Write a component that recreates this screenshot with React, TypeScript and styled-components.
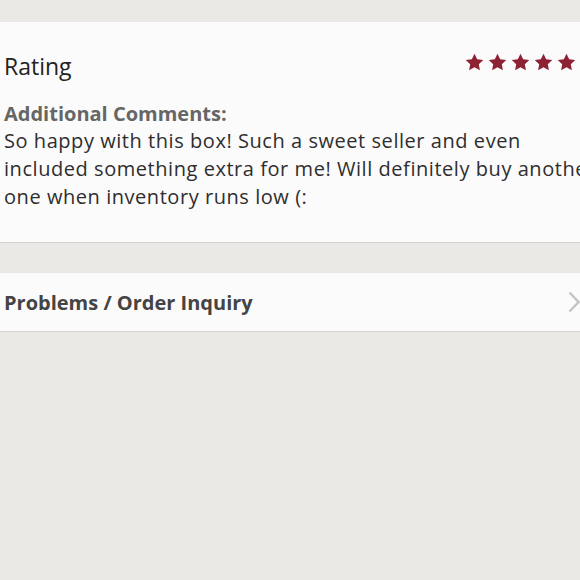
import * as React from 'react';
import styled, { createGlobalStyle } from 'styled-components';

const GlobalStyle = createGlobalStyle`
    html, body {
        margin: 0;
        padding: 0;
        background-color: #ebe9e5;
        overflow: hidden;
    }
    body {
        font-family: "Open Sans", "Lato", sans-serif;
        width: 580px;
        height: 580px;
    }
`;

const Page = styled.main`
    display: flex;
    flex-direction: column;
    gap: 30px;
    padding-top: 22px;
    width: 580px;
    overflow: hidden;
`;

const Card = styled.section`
    background-color: #fcfbfb;
    border-bottom: 1px solid #d6d3cf;
`;

const ReviewCard = styled(Card)`
    display: flex;
    flex-direction: column;
    padding: 28px 0 31px 4px;
`;

const RatingRow = styled.div`
    display: flex;
    justify-content: space-between;
    align-items: center;
    width: 572px;
`;

const Title = styled.h2`
    margin: 0;
    font-size: 23px;
    font-weight: 400;
    color: #222;
`;

const Stars = styled.div`
    display: flex;
    gap: 4px;
    margin-top: -8px;
`;

const Label = styled.h3`
    margin: 18px 0 0;
    font-size: 20px;
    font-weight: 700;
    color: #666;
`;

// the comment runs past the right edge in the app, so it is wider than the view
const Comment = styled.p`
    margin: 0;
    width: 603px;
    flex-shrink: 0;
    font-size: 20px;
    letter-spacing: 0.55px;
    line-height: 28px;
    color: #2e2e2e;
`;

const LinkRow = styled(Card)`
    display: flex;
    align-items: center;
    justify-content: space-between;
    height: 58px;
    padding-left: 4px;
`;

const LinkText = styled.span`
    font-size: 20px;
    font-weight: 700;
    color: #444;
`;

const Star = () => (
    <svg width="19" height="18" viewBox="0 0 24 23">
        <path
            d="M12 0.8l3.4 7.1 7.8 1-5.7 5.4 1.4 7.7L12 18.3l-6.9 3.7 1.4-7.7L0.8 8.9l7.8-1z"
            fill="#8c2233"
            strokeLinejoin="round"
        />
    </svg>
);

const Chevron = () => (
    <svg width="12" height="22" viewBox="0 0 12 22">
        <path d="M1.5 1.5l9 9.5-9 9.5" fill="none" stroke="#c4c4c8" strokeWidth="2.4" />
    </svg>
);

const App = () => (
    <>
        <GlobalStyle />
        <Page>
            <ReviewCard>
                <RatingRow>
                    <Title>Rating</Title>
                    <Stars>
                        {[0, 1, 2, 3, 4].map((i) => <Star key={i} />)}
                    </Stars>
                </RatingRow>
                <Label>Additional Comments:</Label>
                <Comment>
                    So happy with this box! Such a sweet seller and even included something extra for me! Will definitely buy another one when inventory runs low (:
                </Comment>
            </ReviewCard>
            <LinkRow>
                <LinkText>Problems / Order Inquiry</LinkText>
                <Chevron />
            </LinkRow>
        </Page>
    </>
);

export default App;
